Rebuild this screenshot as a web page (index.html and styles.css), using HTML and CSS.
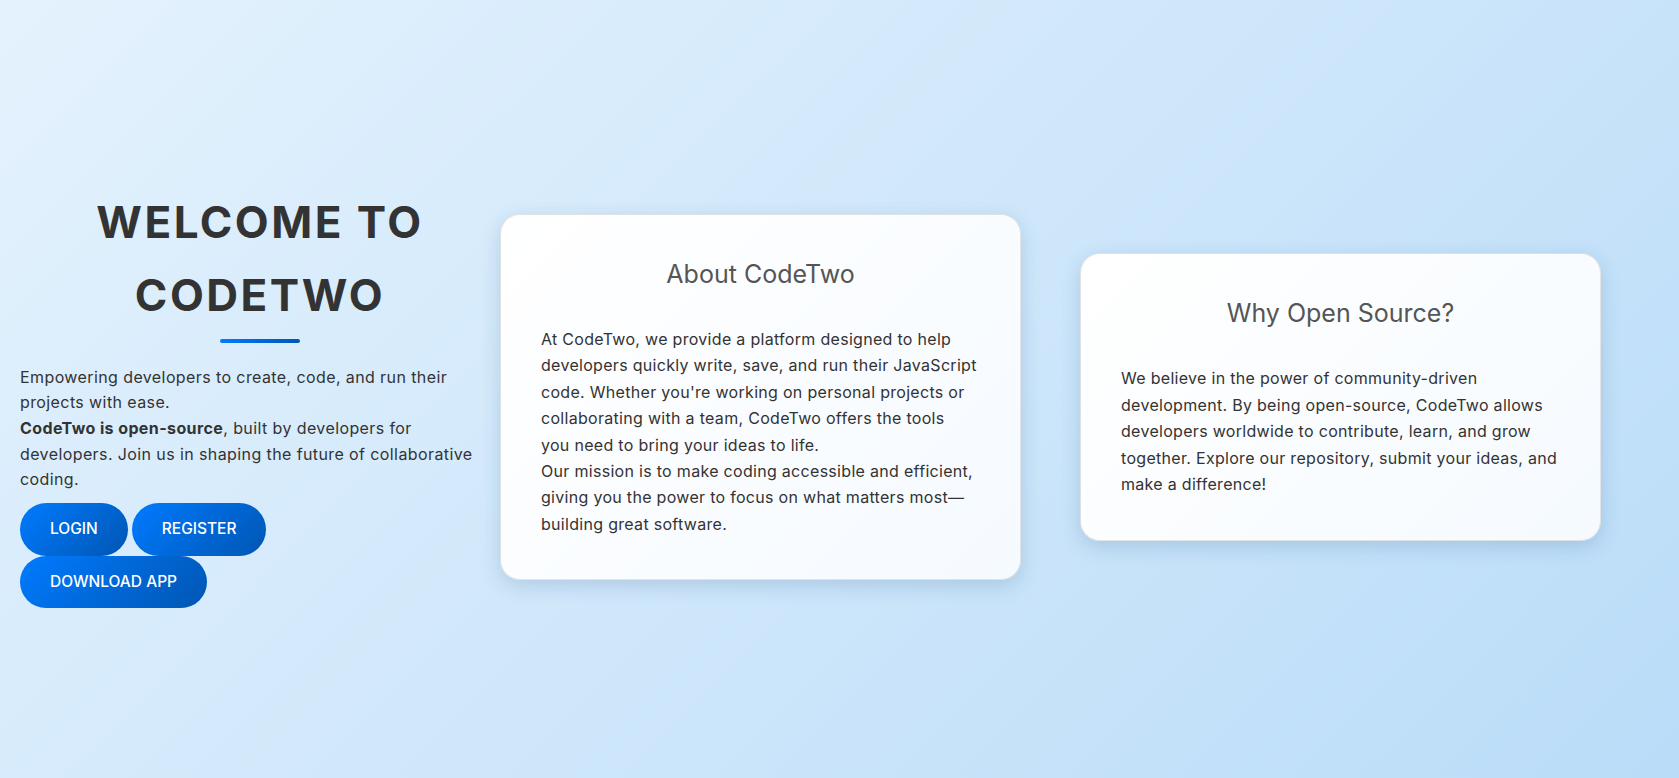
FILE: index.html
```html
<!DOCTYPE html>
<html lang="en">
<head>
  <meta charset="UTF-8" />
  <meta name="viewport" content="width=device-width, initial-scale=1.0" />
  <title>CodeTwo</title>
  <link rel="stylesheet" href="styles.css">
</head>
<body>
  <main class="page">
    <section class="intro">
      <h1>Welcome to CodeTwo</h1>
      <div class="divider"></div>
      <p>
        Empowering developers to create, code, and run their projects with ease.<br>
        <strong>CodeTwo is open-source</strong>, built by developers for developers. Join us in shaping the future of collaborative coding.
      </p>
      <div class="actions">
        <a href="#" class="btn">Login</a>
        <a href="#" class="btn">Register</a>
        <a href="#" class="btn">Download App</a>
      </div>
    </section>

    <section class="cards">
      <div class="card">
        <h2>About CodeTwo</h2>
        <p>
          At CodeTwo, we provide a platform designed to help developers quickly write, save, and run their JavaScript code. Whether you're working on personal projects or collaborating with a team, CodeTwo offers the tools you&nbsp;need to bring your ideas to life.<br>
          Our mission is to make coding accessible and efficient, giving you the power to focus on what matters most—building great software.
        </p>
      </div>
      <div class="card">
        <h2>Why Open Source?</h2>
        <p>
          We believe in the power of community-driven development. By being open-source, CodeTwo allows developers worldwide to contribute, learn, and grow together. Explore our repository, submit your ideas, and make a difference!
        </p>
      </div>
    </section>
  </main>
</body>
</html>
```
FILE: styles.css
```css
* {
  box-sizing: border-box;
  font-family: 'Inter', sans-serif;
}
html, body {
  margin: 0;
  min-height: 100%;
}
body {
  background: linear-gradient(135deg, #e4f2fd, #badcf8);
  color: #333;
  font-size: 16px;
  letter-spacing: 0.4px;
}
.page {
  min-height: 100vh;
  display: flex;
  align-items: center;
  padding: 16px 78px 0 20px;
}

/* left column */
.intro {
  width: 480px;
  flex-shrink: 0;
}
.intro h1 {
  margin: 0;
  text-align: center;
  text-transform: uppercase;
  font-size: 44px;
  line-height: 73px;
  font-weight: 700;
  letter-spacing: 2.5px;
  color: #333;
}
.divider {
  width: 80px;
  height: 4px;
  margin: 7.5px auto 0;
  border-radius: 2px;
  background: linear-gradient(90deg, #007bff, #0056b3);
}
.intro p {
  margin: 21.5px 0 0;
  line-height: 1.6;
}
.intro strong {
  font-weight: 700;
}
.actions {
  display: flex;
  flex-wrap: wrap;
  column-gap: 4px;
  max-width: 260px;
  margin-top: 10.5px;
}
.btn {
  display: inline-block;
  padding: 15px 30px;
  line-height: 22.5px;
  border-radius: 50px;
  background: linear-gradient(135deg, #007bff, #0056b3);
  color: #fff;
  font-size: 15.5px;
  font-weight: 500;
  text-transform: uppercase;
  text-decoration: none;
  letter-spacing: 0;
}

/* info cards */
.cards {
  display: flex;
  align-items: center;
  gap: 59px;
}
.card {
  width: 521px;
  flex-shrink: 0;
  padding: 44px 40px 42px;
  border: 1px solid rgba(0, 0, 0, 0.1);
  border-radius: 20px;
  background: linear-gradient(135deg, #ffffff, #f5faff);
  box-shadow: 0 6px 20px rgba(40, 90, 140, 0.2);
}
.card h2 {
  margin: 0 0 37px;
  text-align: center;
  font-size: 25px;
  line-height: 30px;
  font-weight: 400;
  letter-spacing: 0;
  color: #555;
}
.card p {
  margin: 0;
  font-size: 16px;
  line-height: 26.4px;
  letter-spacing: 0.3px;
  color: #333;
}
```
